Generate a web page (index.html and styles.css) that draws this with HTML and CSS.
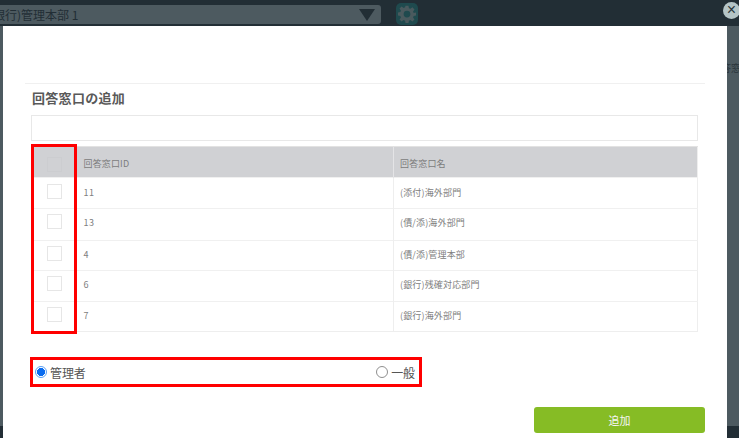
FILE: index.html
```html
<!DOCTYPE html>
<html lang="ja">
<head>
<meta charset="utf-8">
<title>回答窓口の追加</title>
<link rel="stylesheet" href="styles.css">
</head>
<body>
<div class="backdrop">
  <div class="topbar">
    <div class="select"><span class="select-text">(銀行)管理本部 1</span><span class="arrow"></span></div>
    <div class="gear">
      <svg width="18" height="18" viewBox="0 0 24 24"><path fill="#4a5a5e" fill-rule="evenodd" d="M10 1h4l.6 3.200 1.900.8 2.700-1.900 2.800 2.800-1.900 2.700.8 1.900L24 10v4l-3.100.6-.8 1.900 1.900 2.700-2.800 2.800-2.700-1.900-1.900.8L14 24h-4l-.6-3.100-1.900-.8-2.700 1.900-2.800-2.800 1.900-2.700-.8-1.900L0 14v-4l3.100-.6.8-1.900L2 4.800 4.800 2l2.700 1.900 1.900-.8zM12 7.500a4.500 4.500 0 1 0 0 9 4.500 4.500 0 0 0 0-9z"/></svg>
    </div>
  </div>
  <div class="content"><span class="under-text">答窓</span></div>
  <div class="footer"></div>
  <div class="close">×</div>
</div>
<div class="modal">
  <div class="modal-head"></div>
  <div class="modal-body">
    <h2 class="title">回答窓口の追加</h2>
    <div class="search"></div>
    <div class="table-wrap">
      <table class="table">
        <colgroup><col class="col-check"><col class="col-id"><col></colgroup>
        <thead>
          <tr><th><span class="check check-head"></span></th><th>回答窓口ID</th><th>回答窓口名</th></tr>
        </thead>
        <tbody>
          <tr class="r-first"><td><span class="check"></span></td><td class="num">11</td><td>(添付)海外部門</td></tr>
          <tr class="r32"><td><span class="check"></span></td><td class="num">13</td><td>(債/添)海外部門</td></tr>
          <tr class="r30"><td><span class="check"></span></td><td class="num">4</td><td>(債/添)管理本部</td></tr>
          <tr class="r31"><td><span class="check"></span></td><td class="num">6</td><td>(銀行)残確対応部門</td></tr>
          <tr class="r30"><td><span class="check"></span></td><td class="num">7</td><td>(銀行)海外部門</td></tr>
        </tbody>
      </table>
      <div class="mark mark-col"></div>
    </div>
    <div class="roles">
      <label class="role"><span class="radio radio-on"></span>管理者</label>
      <label class="role"><span class="radio"></span>一般</label>
    </div>
    <div class="actions"><button class="add">追加</button></div>
  </div>
</div>
</body>
</html>
```
FILE: styles.css
```css
* { box-sizing: border-box; }
html, body { margin: 0; height: 100%; overflow: hidden; }
body {
  width: 739px;
  height: 438px;
  position: relative;
  font-family: "Noto Sans CJK JP", "Noto Sans", sans-serif;
  background: #4d5a60;
}
.backdrop {
  height: 100%;
  position: relative;
  display: flex;
  flex-direction: column;
}
.topbar {
  height: 26px;
  flex: none;
  background: #222e35;
  display: flex;
  align-items: flex-start;
  padding-top: 3px;
}
.select {
  width: 381px;
  height: 19px;
  background: #4d5a60;
  border-radius: 0 3px 3px 0;
  display: flex;
  align-items: center;
  justify-content: space-between;
  padding-right: 6px;
  margin-top: 2px;
}
.select-text {
  margin-left: -11px;
  font-size: 12px;
  color: #222e35;
  white-space: nowrap;
}
.arrow {
  width: 0;
  height: 0;
  border-left: 8px solid transparent;
  border-right: 8px solid transparent;
  border-top: 12px solid #222e35;
}
.gear {
  margin-left: 15px;
  width: 22px;
  height: 22px;
  background: #1f4a4e;
  border-radius: 5px;
  display: flex;
  align-items: center;
  justify-content: center;
}
.content {
  flex: 1;
  padding: 27px 0 0 721px;
  white-space: nowrap;
}
.under-text {
  font-size: 10px;
  line-height: 16px;
  color: #2b363c;
}
.footer { height: 12px; flex: none; background: #222e35; }
.close {
  position: absolute;
  left: 723px;
  top: 2px;
  width: 17px;
  height: 17px;
  border-radius: 50%;
  background: #b5c5c7;
  color: #2a363c;
  font-size: 16px;
  line-height: 16px;
  text-align: center;
  font-family: "Liberation Sans", sans-serif;
}
.modal {
  position: absolute;
  left: 3px;
  top: 26px;
  width: 724px;
  height: 412px;
  background: #fff;
}
.modal-head {
  height: 58px;
  margin: 0 22px;
  border-bottom: 1px solid #f0f0f0;
}
.modal-body { padding: 0 29px 0 28px; }
.title {
  margin: 0;
  height: 31px;
  padding-left: 1px;
  font-size: 13px;
  line-height: 27px;
  letter-spacing: .3px;
  font-weight: 700;
  color: #595959;
}
.search {
  height: 26px;
  border: 1px solid #e8e8e8;
  background: #fff;
}
.table-wrap { position: relative; margin-top: 5px; }
.table {
  width: 100%;
  border-collapse: collapse;
  table-layout: fixed;
  font-size: 9px;
  line-height: 14px;
  color: #808080;
  letter-spacing: .15px;
  border: 1px solid #eeeeee;
}
.col-check { width: 48px; }
.col-id { width: 314px; }
th {
  height: 31px;
  background: #d0d1d4;
  border-top: 1px solid #e2e2e2;
  border-left: 1px solid #e4e4e6;
  text-align: left;
  font-weight: 400;
  padding: 3px 0 0 6px;
  color: #7c7c7c;
}
td {
  border-top: 1px solid #f0f0f0;
  border-left: 1px solid #eeeeee;
  padding: 7px 0 0 6px;
  vertical-align: top;
}
th:first-child, td:first-child { border-left: 0; padding: 5px 0 0; text-align: center; }
td:nth-child(2), th:nth-child(2) { border-left: 0; padding-left: 4px; }
.num { letter-spacing: .5px; }
.r-first td { height: 31px; padding-top: 8px; }
.r-first td:first-child { padding-top: 6px; }
.r30 td { height: 30px; }
.r31 td { height: 31px; }
.r32 td { height: 32px; }
.check {
  display: block;
  width: 15px;
  height: 15px;
  margin-left: 15px;
  border: 1px solid #e6e6e6;
  background: #fff;
}
.check-head { background: #d0d1d4; border-color: #cccdd0; }
.mark { position: absolute; border: 3px solid #f00; pointer-events: none; }
.mark-col { left: 0; top: -2px; width: 46px; height: 190px; }
.roles {
  margin: 25px 0 0 -1px;
  width: 392px;
  height: 30px;
  border: 3px solid #f00;
  display: flex;
  justify-content: space-between;
  align-items: center;
  padding: 0 4px 0 2px;
}
.role {
  display: flex;
  align-items: center;
  gap: 3px;
  font-size: 12px;
  letter-spacing: -.1px;
  color: #555;
}
.radio {
  width: 12px;
  height: 12px;
  border-radius: 50%;
  border: 1px solid #8f8f8f;
  background: #fff;
}
.radio-on {
  border: 1px solid #5aa0f5;
  background: radial-gradient(circle, #0a6cf0 0 3.800px, #fff 4.300px);
}
.actions { display: flex; justify-content: flex-end; margin-top: 20px; }
.add {
  width: 171px;
  height: 26px;
  margin-right: -7px;
  border: 0;
  border-radius: 3px;
  background: #86bc25;
  color: #f5f5f5;
  font: 400 11px "Noto Sans CJK JP", sans-serif;
}
```
